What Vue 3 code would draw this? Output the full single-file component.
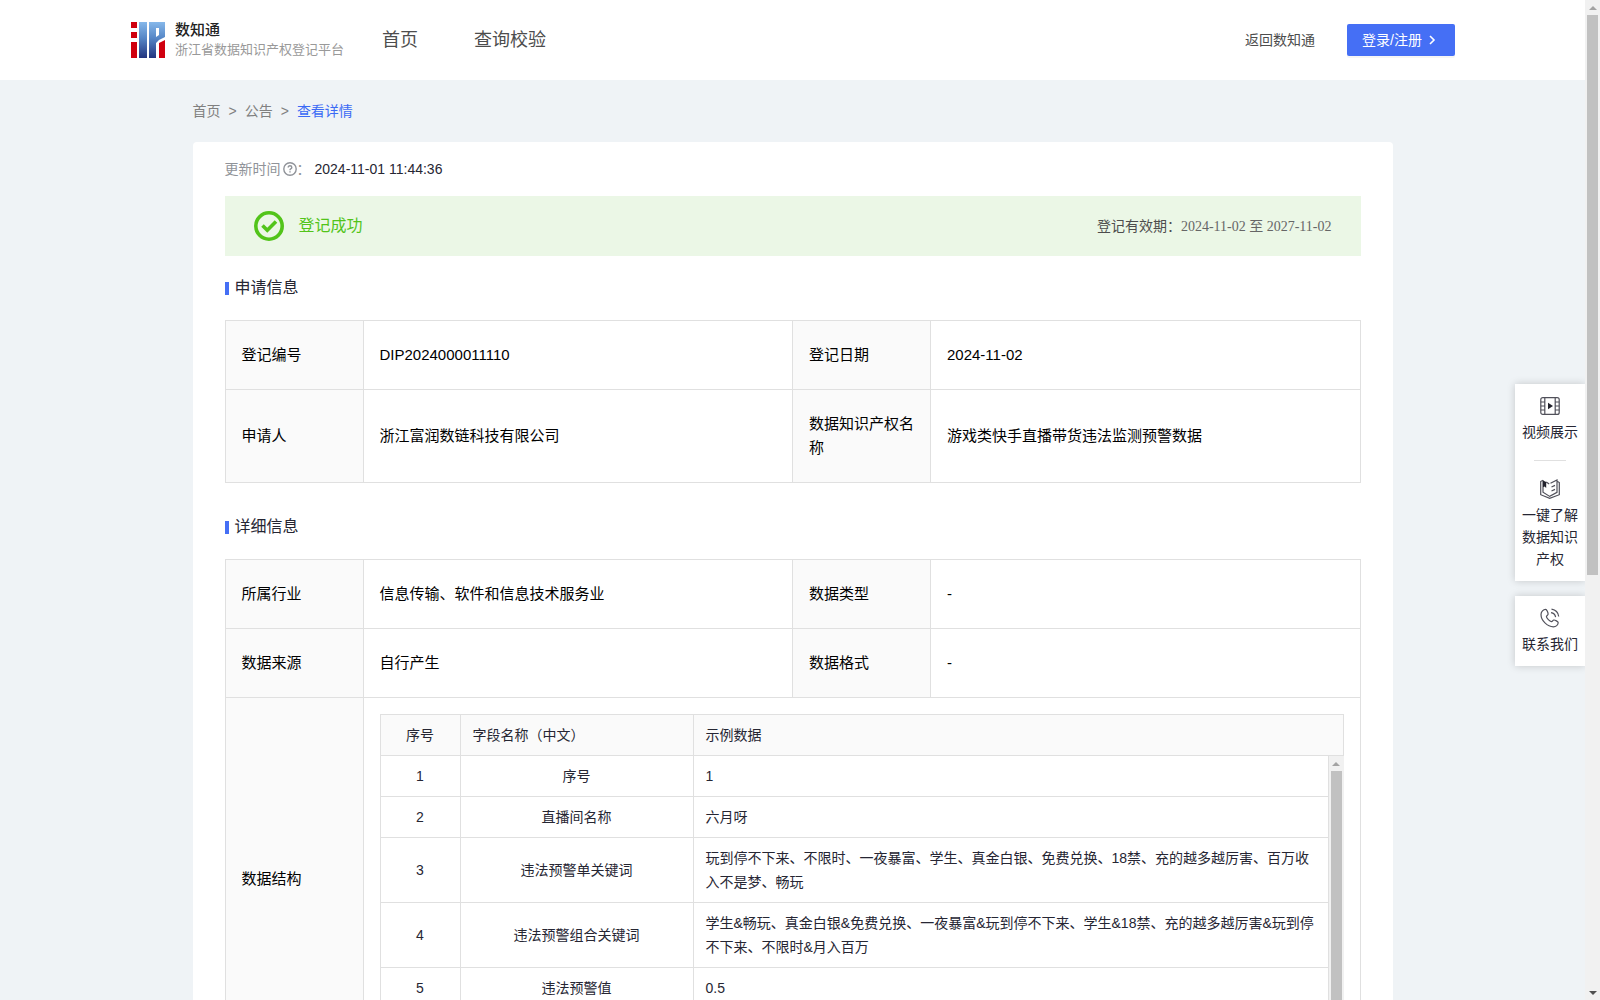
<script setup>
import {ref} from "vue";

const applyRows=ref([
  ['登记编号','DIP2024000011110','登记日期','2024-11-02'],
  ['申请人','浙江富润数链科技有限公司','数据知识产权名称','游戏类快手直播带货违法监测预警数据'],
])
const detailRows=ref([
  ['所属行业','信息传输、软件和信息技术服务业','数据类型','-'],
  ['数据来源','自行产生','数据格式','-'],
])
const fields=ref([
  {name:'序号',sample:'1'},
  {name:'直播间名称',sample:'六月呀'},
  {name:'违法预警单关键词',sample:'玩到停不下来、不限时、一夜暴富、学生、真金白银、免费兑换、18禁、充的越多越厉害、百万收入不是梦、畅玩'},
  {name:'违法预警组合关键词',sample:'学生&畅玩、真金白银&免费兑换、一夜暴富&玩到停不下来、学生&18禁、充的越多越厉害&玩到停不下来、不限时&月入百万'},
  {name:'违法预警值',sample:'0.5'},
])
</script>
<template>
  <div class="shell">
    <div class="page">
      <header class="header">
        <div class="header-inner">
          <a class="brand" href="#">
            <svg class="logo" viewBox="0 0 34 36" width="34" height="36">
              <defs>
                <linearGradient id="blue" gradientUnits="userSpaceOnUse" x1="0" y1="0" x2="0" y2="36">
                  <stop offset="0" stop-color="#86b8ea"/>
                  <stop offset="0.45" stop-color="#5586c6"/>
                  <stop offset="1" stop-color="#23357f"/>
                </linearGradient>
              </defs>
              <path fill="#d0000f" d="M0 0h6v6H0zM0 10h6v6H0zM0 20h6v16H0zM28 21l6-3v18h-6z"/>
              <path fill="url(#blue)" fill-rule="evenodd" d="M8 0h8v36H8zM18 0h16v15l-6 3-3 3v15h-7zM25 6v9l3-2V6z"/>
            </svg>
            <span class="brand-text">
              <strong>数知通</strong>
              <small>浙江省数据知识产权登记平台</small>
            </span>
          </a>
          <nav class="nav">
            <a href="#">首页</a>
            <a href="#">查询校验</a>
          </nav>
          <a class="back" href="#">返回数知通</a>
          <button class="login" type="button">
            登录/注册
            <svg viewBox="0 0 8 10" width="8" height="10"><path d="M2 1l4 4-4 4" fill="none" stroke="#fff" stroke-width="1.6"/></svg>
          </button>
        </div>
      </header>

      <main class="main">
        <nav class="crumbs">
          <a href="#">首页</a><span>&gt;</span><a href="#">公告</a><span>&gt;</span><a class="current" href="#">查看详情</a>
        </nav>
        <section class="card">
          <div class="updated">
            <span>更新时间</span>
            <svg viewBox="0 0 14 14" width="14" height="14" fill="none" stroke="#909399" stroke-width="1.4">
              <circle cx="7" cy="7" r="6.2"/>
              <path d="M5.2 5.6q0-1.800 1.800-1.800t1.800 1.600q0 1-1.100 1.500-.7.4-.7 1.300M7 9.300v1.300"/>
            </svg>
            <span class="colon">：</span>
            <time>2024-11-01 11:44:36</time>
          </div>

          <div class="banner">
            <svg viewBox="0 0 30 30" width="30" height="30" fill="none" stroke="#52c41a">
              <circle cx="15" cy="15" r="13.2" stroke-width="3.6"/>
              <path d="M8.500 14.500l4.800 4.800 8.700-8.700" stroke-width="3.6"/>
            </svg>
            <span class="status">登记成功</span>
            <span class="valid">登记有效期：<span class="valid-date">2024-11-02 至 2027-11-02</span></span>
          </div>

          <h3 class="title">申请信息</h3>
          <table class="info">
            <colgroup><col class="label-col"><col><col class="label-col"><col></colgroup>
            <tbody>
              <tr v-for="row in applyRows" :key="row[0]">
                <th>{{row[0]}}</th><td>{{row[1]}}</td>
                <th>{{row[2]}}</th><td>{{row[3]}}</td>
              </tr>
            </tbody>
          </table>

          <h3 class="title">详细信息</h3>
          <table class="info">
            <colgroup><col class="label-col"><col><col class="label-col"><col></colgroup>
            <tbody>
              <tr v-for="row in detailRows" :key="row[0]">
                <th>{{row[0]}}</th><td>{{row[1]}}</td>
                <th>{{row[2]}}</th><td>{{row[3]}}</td>
              </tr>
              <tr>
                <th>数据结构</th>
                <td class="struct" colspan="3">
                  <table class="fields head">
                    <colgroup><col class="no-col"><col class="name-col"><col></colgroup>
                    <thead>
                      <tr><th class="center">序号</th><th>字段名称（中文）</th><th>示例数据</th></tr>
                    </thead>
                  </table>
                  <div class="fields-body">
                    <table class="fields">
                      <colgroup><col class="no-col"><col class="name-col"><col></colgroup>
                      <tbody>
                        <tr v-for="(field,index) in fields" :key="field.name">
                          <td class="center">{{index+1}}</td>
                          <td class="center">{{field.name}}</td>
                          <td>{{field.sample}}</td>
                        </tr>
                      </tbody>
                    </table>
                    <div class="scrollbar">
                      <i class="arrow up"></i>
                      <i class="thumb"></i>
                    </div>
                  </div>
                </td>
              </tr>
            </tbody>
          </table>
        </section>
      </main>

      <aside class="side">
        <div class="side-box">
          <a href="#">
            <svg viewBox="0 0 20 20" width="20" height="20" fill="none" stroke="#50505a" stroke-width="1.2">
              <rect x="0.8" y="1.6" width="18.4" height="16.8" rx="2"/>
              <path d="M4.8 1.6v16.8M15.2 1.6v16.8M.8 6h4M.8 10h4M.8 14h4M15.2 6h4M15.2 10h4M15.2 14h4"/>
              <path d="M8 6.800l5 3.200-5 3.200z" fill="#22222c" stroke="none"/>
            </svg>
            视频展示
          </a>
          <hr>
          <a href="#">
            <svg viewBox="0 0 20 20" width="20" height="20" fill="none" stroke="#50505a" stroke-width="1.2">
              <path d="M3 1.200L.7 2.500v13.200l9 3.600 9.600-3.600V3.500L17.500 2.500M3 1.200v12l6.700 4.200 7.300-4V1L10.500 4.200M6.200 3l3 2"/>
              <path d="M11.500 8l3.500-1.600M11.500 12l3.500-1.600"/>
              <path d="M3 1.500l3.200 1.400v6L4.600 7.600 3 8.200z" fill="#22222c" stroke="none"/>
            </svg>
            一键了解数据知识产权
          </a>
        </div>
        <div class="side-box">
          <a href="#">
            <svg viewBox="0 0 20 20" width="20" height="20" fill="none" stroke="#50505a" stroke-width="1.2">
              <path d="M5.600 1.400C3.400 1.400 1 3.600 1 6.400c0 6 6.400 12.400 12.400 12.400 2.600 0 4.600-2 4.800-4 .1-1.200-3.400-3-4.400-2.800-1 .2-1.400 1.800-2.300 1.700C9.600 13.300 6.700 10.400 6.400 8.600 6.300 7.800 8 7.200 8.100 6.200 8.200 5 6.800 1.400 5.600 1.400z"/>
              <path d="M11 4.600q4 .6 4.600 4.600M11.500 1.200q6.400 1 7.200 7.300"/>
            </svg>
            联系我们
          </a>
        </div>
      </aside>
    </div>
    <div class="scrollbar page-bar">
      <i class="arrow up"></i>
      <i class="thumb"></i>
      <i class="arrow down"></i>
    </div>
  </div>
</template>
<style>
body{
  margin: 0;
}
</style>
<style scoped>
.shell{
  display: flex;
  height: 100vh;
  overflow: hidden;
  font-family: "Liberation Sans", "Noto Sans CJK SC", sans-serif;
  font-size: 14px;
  line-height: 24px;
  color: #262633;
  background-color: #eff3f6;
}
.shell *{
  box-sizing: border-box;
}
a{
  color: inherit;
  text-decoration: none;
}
svg{
  flex: none;
}
.page{
  flex: 1;
  position: relative;
  overflow: hidden;
}
.header{
  background-color: #fff;
}
.header-inner{
  display: flex;
  align-items: center;
  max-width: 1325px;
  height: 80px;
  margin: 0 auto;
  padding-left: 1px;
  color: #4d4d4d;
}
.brand{
  display: flex;
  align-items: center;
  gap: 10px;
}
.brand-text{
  display: flex;
  flex-direction: column;
  line-height: 20px;
}
.brand-text strong{
  font-size: 15px;
  font-weight: 500;
  color: #222;
}
.brand-text small{
  font-size: 13px;
  color: #999;
}
.nav{
  display: flex;
  gap: 56px;
  margin-left: 38px;
  font-size: 18px;
}
.back{
  margin-left: auto;
}
.login{
  display: flex;
  align-items: center;
  gap: 6px;
  width: 108px;
  height: 32px;
  margin-left: 32px;
  padding: 0 15px;
  border: none;
  border-radius: 2px;
  background-color: #456ff5;
  box-shadow: 0 2px 0 rgba(0,0,0,0.04);
  color: #fff;
  font: inherit;
  white-space: nowrap;
}
.main{
  max-width: 1200px;
  margin: 0 auto;
}
.crumbs{
  display: flex;
  gap: 8px;
  padding: 19px 0;
  color: #808080;
}
.crumbs .current{
  color: #3b6af5;
}
.card{
  padding: 15px 32px 32px;
  border-radius: 4px;
  background-color: #fff;
}
.updated{
  display: flex;
  align-items: center;
  color: #909399;
}
.updated svg{
  margin-left: 2px;
}
.updated .colon{
  width: 18px;
}
.updated time{
  color: #262633;
}
.banner{
  display: flex;
  align-items: center;
  height: 60px;
  margin-top: 15px;
  padding: 0 29px;
  background-color: #ebf7e6;
}
.status{
  margin-left: 15px;
  font-size: 16px;
  color: #52c41a;
}
.valid{
  margin-left: auto;
  color: #4d4d4d;
}
.valid-date{
  font-family: "Liberation Serif", "Noto Sans CJK SC", serif;
  color: #666;
}
.title{
  display: flex;
  align-items: center;
  gap: 6px;
  margin: 20px 0;
  font-size: 16px;
  font-weight: 400;
}
.title::before{
  content: "";
  width: 4px;
  height: 13px;
  background-color: #456ff5;
}
.info + .title{
  margin-top: 32px;
}
table{
  width: 100%;
  table-layout: fixed;
  border-spacing: 0;
  border-left: 1px solid #e0e0e0;
}
th, td{
  border-right: 1px solid #e0e0e0;
  border-bottom: 1px solid #e0e0e0;
  font-weight: 400;
  text-align: left;
}
th{
  background-color: #fafafa;
}
.info{
  border-top: 1px solid #e0e0e0;
}
.info th, .info td{
  padding: 22px 16px;
  font-size: 15px;
  color: #000;
}
.label-col{
  width: 138px;
}
.info .struct{
  padding: 16px;
}
.no-col{
  width: 80px;
}
.name-col{
  width: 233px;
}
.fields.head{
  border-top: 1px solid #e0e0e0;
}
.info .fields th, .info .fields td{
  padding: 8px 12px;
  font-size: 14px;
  color: #262633;
}
.info .fields .center{
  text-align: center;
}
.fields-body{
  display: flex;
  height: 287px;
  overflow: hidden;
}
.fields-body .fields{
  flex: 1;
  align-self: flex-start;
}
.scrollbar{
  display: flex;
  flex-direction: column;
  align-items: center;
  flex: none;
  width: 15px;
  background-color: #f1f1f1;
}
.arrow{
  flex: none;
  width: 8px;
  height: 15px;
}
.arrow::before{
  content: "";
  display: block;
  margin-top: 6px;
  border: 4px solid transparent;
  border-top-width: 0;
  border-bottom-color: #a3a3a3;
}
.arrow.down{
  margin-top: auto;
}
.arrow.down::before{
  border-top: 4px solid #505050;
  border-bottom-width: 0;
}
.thumb{
  flex: none;
  width: 11px;
  height: 250px;
  background-color: #c1c1c1;
}
.page-bar .thumb{
  height: 56%;
}
.side{
  position: absolute;
  top: 384px;
  right: 0;
  display: flex;
  flex-direction: column;
  gap: 15px;
  width: 70px;
}
.side-box{
  padding: 12px 7px 11px;
  background-color: #fff;
  box-shadow: 0 0 8px rgba(0,0,0,0.18);
}
.side-box a{
  display: flex;
  flex-direction: column;
  align-items: center;
  gap: 5px;
  line-height: 22px;
  text-align: center;
}
.side-box hr{
  width: 32px;
  height: 1px;
  margin: 17px auto 18px;
  border: none;
  background-color: #e0e0e0;
}
</style>
